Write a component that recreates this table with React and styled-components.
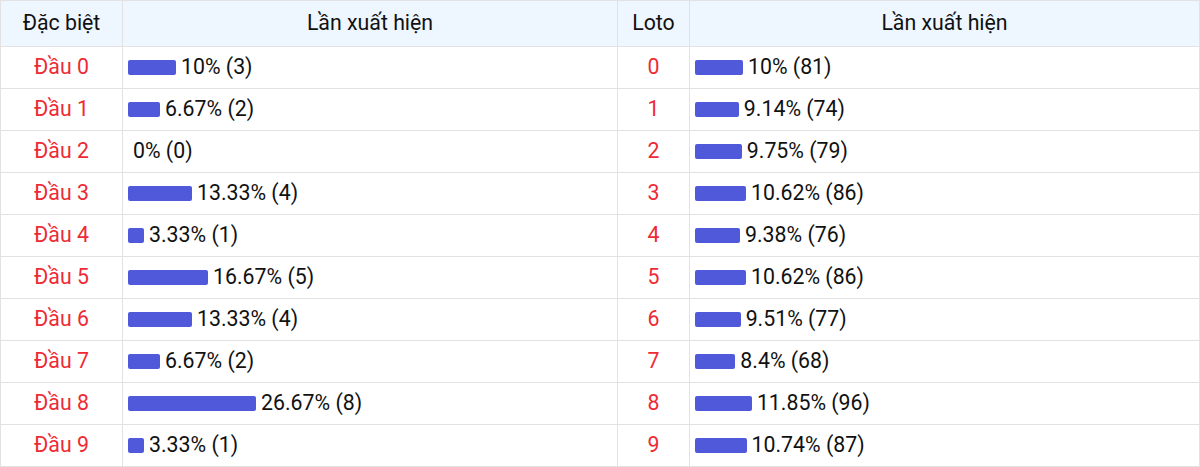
import { createGlobalStyle } from "styled-components"
import styled from "styled-components"

const GlobalStyle = createGlobalStyle`
  body {
    margin: 0;
    background: #ffffff;
    font-family: Roboto, "Liberation Sans", Arial, sans-serif;
  }
`

const special = [
  { label: "Đầu 0", pct: 10, count: 3 },
  { label: "Đầu 1", pct: 6.67, count: 2 },
  { label: "Đầu 2", pct: 0, count: 0 },
  { label: "Đầu 3", pct: 13.33, count: 4 },
  { label: "Đầu 4", pct: 3.33, count: 1 },
  { label: "Đầu 5", pct: 16.67, count: 5 },
  { label: "Đầu 6", pct: 13.33, count: 4 },
  { label: "Đầu 7", pct: 6.67, count: 2 },
  { label: "Đầu 8", pct: 26.67, count: 8 },
  { label: "Đầu 9", pct: 3.33, count: 1 },
]

const loto = [
  { pct: 10, count: 81 },
  { pct: 9.14, count: 74 },
  { pct: 9.75, count: 79 },
  { pct: 10.62, count: 86 },
  { pct: 9.38, count: 76 },
  { pct: 10.62, count: 86 },
  { pct: 9.51, count: 77 },
  { pct: 8.4, count: 68 },
  { pct: 11.85, count: 96 },
  { pct: 10.74, count: 87 },
]

const StyledTable = styled.table`
  width: 1200px;
  border-collapse: collapse;
  table-layout: fixed;
  font-size: 21.3px;
  color: #111111;

  th, td {
    border: 1px solid #e2e2e2;
    padding: 0 5px 2px;
    white-space: nowrap;
  }

  thead tr {
    height: 46px;
    background-color: #eef6ff;
  }

  th {
    font-weight: normal;
    text-align: center;
  }

  tbody tr {
    height: 42px;
  }
`

const Col = styled.col`
  width: ${({ $w }) => ($w ? `${$w}px` : "auto")};
`

const Head = styled.td`
  text-align: center;
  color: #ee2a34;
`

const Bar = styled.span`
  display: inline-block;
  vertical-align: middle;
  height: 15px;
  margin-right: 5px;
  margin-top: -1px;
  border-radius: 2px;
  background-color: #5159db;
`

function Stat({ pct, count }) {
  return (
    <td>
      <Bar style={{ width: `${pct * 4.8}px` }} />
      {pct}% ({count})
    </td>
  )
}

export default function App() {
  return (
    <>
      <GlobalStyle />
      <StyledTable>
        <colgroup>
          <Col $w={122} />
          <Col $w={495} />
          <Col $w={72} />
          <Col />
        </colgroup>
        <thead>
          <tr>
            <th>Đặc biệt</th>
            <th>Lần xuất hiện</th>
            <th>Loto</th>
            <th>Lần xuất hiện</th>
          </tr>
        </thead>
        <tbody>
          {special.map((row, i) => (
            <tr key={row.label}>
              <Head>{row.label}</Head>
              <Stat pct={row.pct} count={row.count} />
              <Head>{i}</Head>
              <Stat pct={loto[i].pct} count={loto[i].count} />
            </tr>
          ))}
        </tbody>
      </StyledTable>
    </>
  )
}
